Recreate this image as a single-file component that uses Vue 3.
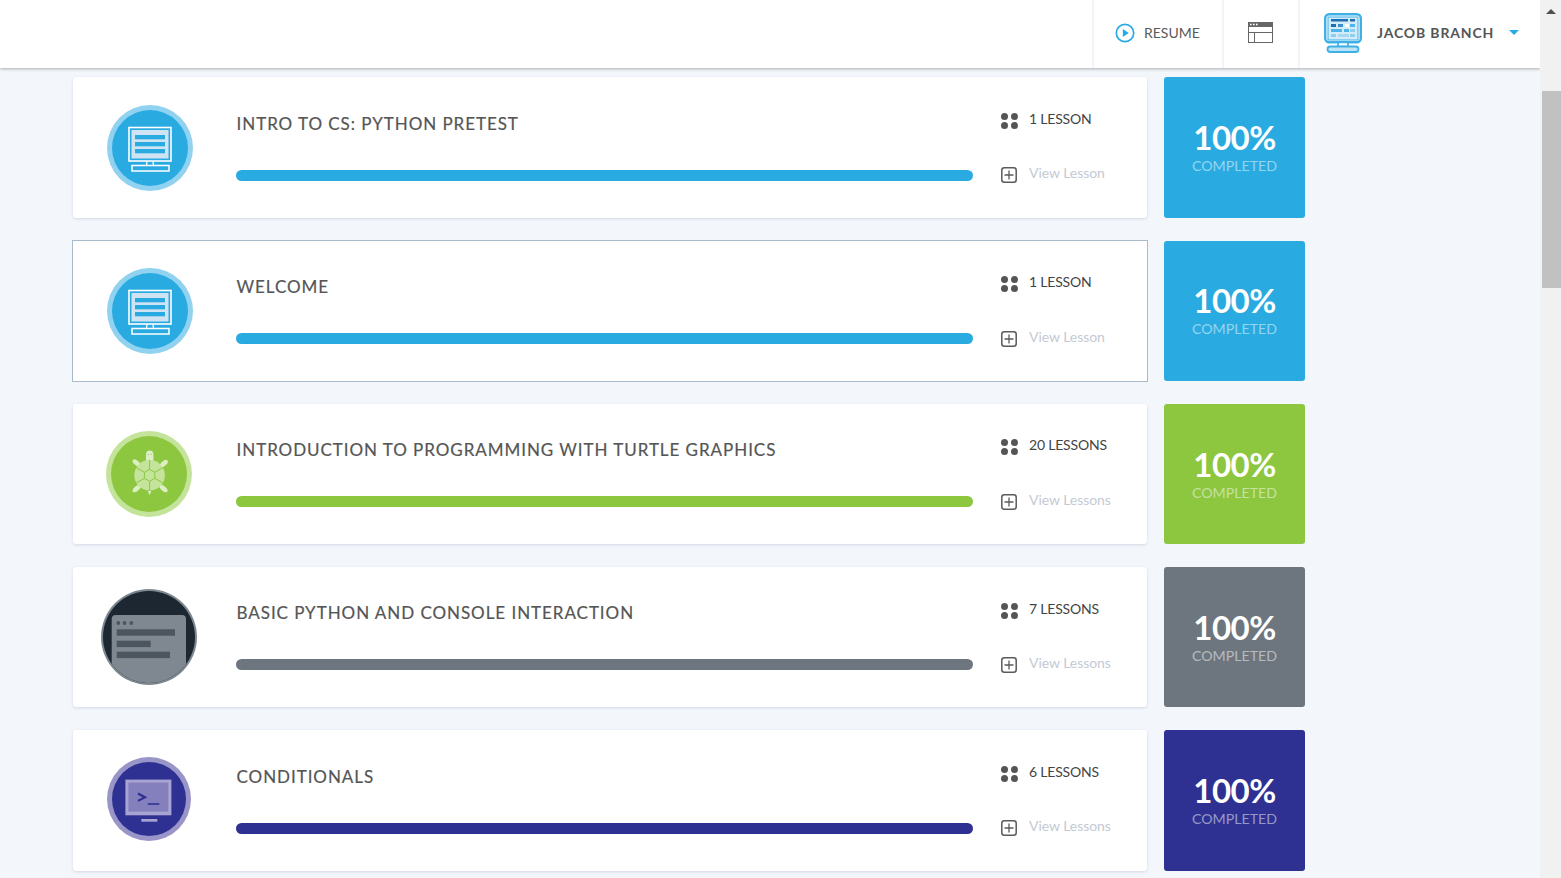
<template>
  <div class="page">
    <div class="main">
      <header class="topbar">
        <div class="top-item resume">
          <svg class="play" viewBox="0 0 20 20" fill="none">
            <circle cx="10" cy="10" r="8.7" stroke="#29abe2" stroke-width="1.7"/>
            <path d="M7.8 6.1l6 3.9-6 3.9z" fill="#29abe2"/>
          </svg>
          <span>RESUME</span>
        </div>
        <div class="top-item layout">
          <svg class="win" viewBox="0 0 25 21" fill="none">
            <rect x=".5" y=".5" width="24" height="20" stroke="#666"/>
            <rect x="0" y="0" width="25" height="5" fill="#666"/>
            <rect x="2" y="1.7" width="1.6" height="1.6" fill="#fff"/>
            <rect x="5" y="1.7" width="1.6" height="1.6" fill="#fff"/>
            <rect x="8" y="1.7" width="1.6" height="1.6" fill="#fff"/>
            <path d="M0 10.500h25M6.500 10.500V21" stroke="#666"/>
          </svg>
        </div>
        <div class="top-item user">
          <svg class="avatar" viewBox="0 0 38 40" fill="none">
            <rect x="1.200" y="1.200" width="35.600" height="28" rx="4" fill="#fff" stroke="#3fb0e6" stroke-width="2.400"/>
            <rect x="4" y="4" width="30" height="23" fill="#d4ecf9" stroke="#3fb0e6"/>
            <rect x="7" y="6" width="17" height="2.500" fill="#1c6fb0"/>
            <rect x="26" y="6" width="5" height="2.500" fill="#1c6fb0"/>
            <rect x="7" y="11" width="5" height="3" fill="#1c6fb0"/>
            <rect x="14" y="11" width="5" height="3" fill="#3b8fd0"/>
            <rect x="21" y="11" width="4" height="3" fill="#fff"/>
            <rect x="26" y="11" width="5" height="3" fill="#4db5e8"/>
            <rect x="7" y="16" width="11" height="3" fill="#4db5e8"/>
            <rect x="20" y="16" width="5" height="3" fill="#4db5e8"/>
            <rect x="26" y="16" width="5" height="3" fill="#8ccff0"/>
            <rect x="7" y="21" width="5" height="3" fill="#8ccff0"/>
            <rect x="14" y="21" width="11" height="3" fill="#a7d8f3"/>
            <rect x="26" y="21" width="5" height="3" fill="#8ccff0"/>
            <path d="M14.500 29.500l-1 4h11l-1-4z" fill="#fff" stroke="#3fb0e6" stroke-width="1.600"/>
            <rect x="3.500" y="33.500" width="31" height="5.500" rx="2.700" fill="#bfe3f6" stroke="#3fb0e6" stroke-width="1.800"/>
          </svg>
          <span class="user-name">JACOB BRANCH</span>
          <span class="caret"></span>
        </div>
      </header>

      <div class="list">
        <div v-for="row in rows" :key="row.title" class="row">
          <div class="card" :class="{ selected: row.selected }">
            <div class="badge">
              <svg v-if="row.icon === 'monitor'" viewBox="0 0 86 86" class="badge-svg monitor">
                <circle cx="43" cy="43" r="43" fill="#90d2f0"/>
                <circle cx="43" cy="43" r="38" fill="#29abe2"/>
                <rect x="22" y="22.500" width="42" height="33.500" fill="none" stroke="#fff" stroke-width="1.600"/>
                <rect x="24.500" y="25" width="37" height="28.500" fill="#cfe3f3"/>
                <rect x="28" y="30" width="30" height="4.300" fill="#29abe2"/>
                <rect x="28" y="37" width="30" height="4.300" fill="#29abe2"/>
                <rect x="28" y="44" width="30" height="4.300" fill="#29abe2"/>
                <path d="M40 56.500l-.5 4M46 56.500l.5 4" stroke="#fff" stroke-width="1.300"/>
                <rect x="25" y="60.500" width="37" height="5.500" fill="none" stroke="#fff" stroke-width="1.500"/>
              </svg>
              <svg v-else-if="row.icon === 'turtle'" viewBox="0 0 86 86" class="badge-svg turtle">
                <circle cx="43" cy="43" r="43" fill="#c5e49b"/>
                <circle cx="43" cy="43" r="38" fill="#8dc63f"/>
                <path d="M40 31v-7.800a3.700 3.700 0 0 1 7.400 0V31z" fill="#dcefc4"/>
                <circle cx="42.200" cy="23.500" r=".6" fill="#8dc63f"/>
                <circle cx="45.200" cy="23.500" r=".6" fill="#8dc63f"/>
                <ellipse cx="30.600" cy="32" rx="4.800" ry="2.400" transform="rotate(40 30.600 32)" fill="#dcefc4"/>
                <ellipse cx="57.800" cy="32.600" rx="4.800" ry="2.400" transform="rotate(-40 57.800 32.600)" fill="#dcefc4"/>
                <ellipse cx="30.600" cy="57.600" rx="4.800" ry="2.400" transform="rotate(-40 30.600 57.600)" fill="#dcefc4"/>
                <ellipse cx="57.600" cy="57.600" rx="4.800" ry="2.400" transform="rotate(40 57.600 57.600)" fill="#dcefc4"/>
                <path d="M41.900 60h3.400l-1.700 4.300z" fill="#dcefc4"/>
                <circle cx="43.600" cy="44.300" r="15.300" fill="#c5e49b"/>
                <path d="M43.600 38.300l5.200 3v6l-5.200 3-5.200-3v-6zM43.600 29v9.300M48.800 41.300l8-4.600M48.800 47.300l8 4.600M43.600 50.300v9.300M38.400 47.300l-8 4.600M38.400 41.300l-8-4.600" fill="none" stroke="#8dc63f" stroke-width="1"/>
              </svg>
              <svg v-else-if="row.icon === 'console'" viewBox="0 0 96 96" class="badge-svg console">
                <defs>
                  <clipPath id="console-clip"><circle cx="48" cy="48" r="46"/></clipPath>
                </defs>
                <circle cx="48" cy="48" r="48" fill="#7f8890"/>
                <circle cx="48" cy="48" r="46" fill="#1c2732"/>
                <path d="M10.700 30q0-4 4-4h66.300q4 0 4 4v66H10.700z" fill="#7f8890" clip-path="url(#console-clip)"/>
                <circle cx="17.300" cy="34" r="1.900" fill="#4c565f"/>
                <circle cx="23.500" cy="34" r="1.900" fill="#4c565f"/>
                <circle cx="30.300" cy="34" r="1.900" fill="#4c565f"/>
                <rect x="15.700" y="40.300" width="58.300" height="6.400" fill="#4c565f"/>
                <rect x="15.700" y="51.700" width="34" height="6.400" fill="#4c565f"/>
                <rect x="15.700" y="62.700" width="53.300" height="6.400" fill="#4c565f"/>
              </svg>
              <svg v-else viewBox="0 0 84 84" class="badge-svg terminal">
                <circle cx="42" cy="42" r="42" fill="#9a95c9"/>
                <circle cx="42" cy="42" r="37" fill="#2e3192"/>
                <rect x="18.400" y="22.600" width="46" height="35.700" fill="#a8a4d2"/>
                <rect x="21.500" y="25.600" width="39.800" height="29" fill="#2e3192" opacity=".35"/>
                <rect x="22" y="26" width="39" height="28" fill="#8480bd"/>
                <path d="M31 36.500l7 3.700-7 3.700" fill="none" stroke="#2e3192" stroke-width="2.200"/>
                <path d="M40.700 47h11.600" stroke="#2e3192" stroke-width="1.600"/>
                <rect x="34.300" y="62" width="16" height="2.700" fill="#a8a4d2"/>
              </svg>
            </div>
            <div class="body">
              <h2 class="title">{{ row.title }}</h2>
              <div class="bar" :style="{ background: row.color }"></div>
            </div>
            <div class="meta">
              <div class="meta-line count">
                <span class="dots"><i></i><i></i><i></i><i></i></span>
                <span class="count-text">{{ row.count }}</span>
              </div>
              <div class="meta-line view">
                <svg class="plus" viewBox="0 0 16 16" fill="none">
                  <rect x=".8" y=".8" width="14.400" height="14.400" rx="2.500" stroke="#5a5a5a" stroke-width="1.500"/>
                  <path d="M8 3.500v9M3.500 8h9" stroke="#5a5a5a" stroke-width="1.300"/>
                </svg>
                <span class="view-text">{{ row.view }}</span>
              </div>
            </div>
          </div>
          <div class="tile" :style="{ background: row.color }">
            <div class="pct">100%</div>
            <div class="done">COMPLETED</div>
          </div>
        </div>
      </div>
    </div>
    <div class="scrollbar">
      <span class="arrow"></span>
      <div class="thumb"></div>
    </div>
  </div>
</template>

<script setup>
const rows = [
  { title: "INTRO TO CS: PYTHON PRETEST", count: "1 LESSON", view: "View Lesson", color: "#29abe2", icon: "monitor" },
  { title: "WELCOME", count: "1 LESSON", view: "View Lesson", color: "#29abe2", icon: "monitor", selected: true },
  { title: "INTRODUCTION TO PROGRAMMING WITH TURTLE GRAPHICS", count: "20 LESSONS", view: "View Lessons", color: "#8dc63f", icon: "turtle" },
  { title: "BASIC PYTHON AND CONSOLE INTERACTION", count: "7 LESSONS", view: "View Lessons", color: "#6d767e", icon: "console" },
  { title: "CONDITIONALS", count: "6 LESSONS", view: "View Lessons", color: "#2e3192", icon: "terminal" },
]
</script>

<style>
html, body {
  margin: 0;
  overflow: hidden;
}
</style>

<style scoped>
.page {
  display: flex;
  width: 1561px;
  height: 878px;
  overflow: hidden;
  background: #f3f6fb;
  font-family: "Lato", "Liberation Sans", sans-serif;
}

.main {
  position: relative;
  flex: 1;
  min-width: 0;
  overflow: hidden;
}

.topbar {
  display: flex;
  justify-content: flex-end;
  height: 68px;
  background: #fff;
  box-shadow: 0 1px 3px rgba(0, 0, 0, 0.3);
  position: relative;
  z-index: 2;
}

.top-item {
  display: flex;
  align-items: center;
  box-sizing: border-box;
  padding-bottom: 4px;
  border-left: 2px solid #f1f3f7;
  color: #5a5a5a;
}

.resume {
  width: 130px;
  padding-left: 21px;
  font-size: 14px;
}

.play {
  width: 20px;
  height: 20px;
  margin: 2px 9px 0 0;
}

.layout {
  width: 76px;
  padding-right: 2px;
  justify-content: center;
}

.win {
  width: 25px;
  height: 21px;
}

.user {
  width: 242px;
  padding-left: 24px;
}

.avatar {
  width: 38px;
  height: 40px;
  margin: 2px 15px 0 0;
}

.user-name {
  font-size: 14px;
  font-weight: 700;
  letter-spacing: 0.85px;
  color: #555;
}

.caret {
  margin-left: 15px;
  border-left: 5px solid transparent;
  border-right: 5px solid transparent;
  border-top: 5px solid #29abe2;
}

.list {
  display: flex;
  flex-direction: column;
  gap: 22.95px;
  padding: 9.4px 0 0 73px;
}

.row {
  display: flex;
  gap: 17px;
  height: 140.3px;
}

.card {
  display: flex;
  box-sizing: border-box;
  width: 1074px;
  height: 140.3px;
  background: #fff;
  border-radius: 3px;
  box-shadow: 0 1px 3px rgba(90, 100, 130, 0.2);
}

.card.selected {
  border: 1px solid #a9bbcb;
  border-radius: 0;
  margin: -1px -1px 0 -1px;
  width: 1076px;
  height: 142.3px;
  box-shadow: none;
}

.badge {
  display: flex;
  align-items: center;
  justify-content: center;
  width: 153px;
  flex: none;
}

.badge-svg {
  display: block;
  flex: none;
}

.monitor { width: 86px; height: 86px; }
.turtle { width: 86px; height: 86px; margin-left: -2px; }
.console { width: 96px; height: 96px; margin-left: -2px; }
.terminal { width: 84px; height: 84px; margin: -3px 0 0 -2px; }

.body {
  width: 737px;
  margin-left: 10px;
  flex: none;
  padding-top: 36.3px;
}

.title {
  margin: 0;
  padding-left: 0.5px;
  font-size: 17px;
  font-weight: 400;
  line-height: 20px;
  letter-spacing: 0.95px;
  color: #555;
  -webkit-text-stroke: 0.2px #555;
}

.bar {
  height: 11px;
  border-radius: 6px;
  margin-top: 36px;
}

.meta {
  margin-left: 28px;
  padding-top: 33px;
}

.meta-line {
  display: flex;
  align-items: center;
  font-size: 14px;
}

.count {
  color: #444;
  height: 20px;
  letter-spacing: -0.2px;
}

.count-text {
  margin-bottom: 4px;
}

.view {
  color: #c4cad3;
  height: 20px;
  margin-top: 35px;
}

.view-text {
  margin-bottom: 5px;
  letter-spacing: -0.05px;
}

.dots {
  display: grid;
  grid-template-columns: 7px 7px;
  gap: 2px 3px;
  margin-right: 11px;
  width: 17px;
  padding-top: 1px;
}

.dots i {
  width: 7px;
  height: 7px;
  border-radius: 50%;
  background: #555;
}

.plus {
  width: 16px;
  height: 16px;
  margin-right: 12px;
  flex: none;
}

.tile {
  display: flex;
  flex-direction: column;
  align-items: center;
  width: 141px;
  height: 140.3px;
  border-radius: 3px;
  padding-top: 39.7px;
  box-sizing: border-box;
}

.pct {
  color: #fff;
  font-size: 33px;
  line-height: 41px;
  font-weight: 700;
  letter-spacing: -0.5px;
}

.done {
  color: rgba(255, 255, 255, 0.5);
  font-size: 14.2px;
  line-height: 16px;
}

.scrollbar {
  position: relative;
  width: 21px;
  flex: none;
  background: #f1f1f1;
}

.arrow {
  position: absolute;
  top: 9px;
  left: 6px;
  border-left: 5px solid transparent;
  border-right: 5px solid transparent;
  border-bottom: 5px solid #505050;
}

.thumb {
  position: absolute;
  top: 91px;
  left: 2px;
  width: 19px;
  height: 197px;
  background: #c1c1c1;
}
</style>
